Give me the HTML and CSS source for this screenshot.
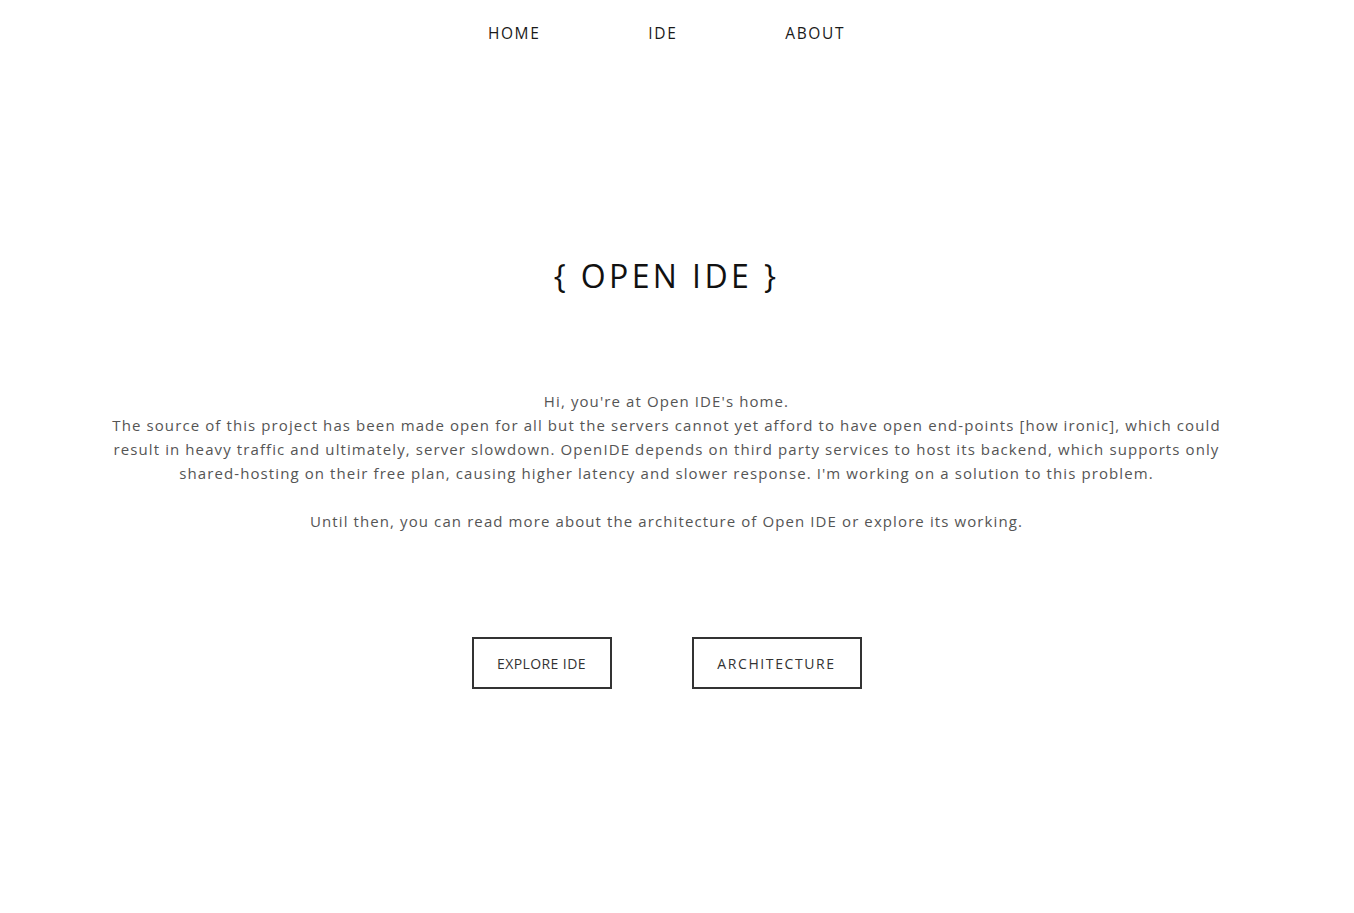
FILE: index.html
```html
<!DOCTYPE html>
<html lang="en">
<head>
<meta charset="utf-8">
<title>Open IDE</title>
<link rel="stylesheet" href="styles.css">
</head>
<body>
<div class="page">
  <nav class="nav">
    <a class="nav-link" href="#">HOME</a>
    <a class="nav-link" href="#">IDE</a>
    <a class="nav-link" href="#">ABOUT</a>
  </nav>
  <h1 class="title">{ OPEN IDE }</h1>
  <p class="intro">Hi, you're at Open IDE's home.<br>The source of this project has been made open for all but the servers cannot yet afford to have open end-points [how ironic], which could result in heavy traffic and ultimately, server slowdown. OpenIDE depends on third party services to host its backend, which supports only shared-hosting on their free plan, causing higher latency and slower response. I'm working on a solution to this problem.<br><br>Until then, you can read more about the architecture of Open IDE or explore its working.</p>
  <div class="actions">
    <a class="btn btn-explore" href="#">EXPLORE IDE</a>
    <a class="btn btn-arch" href="#">ARCHITECTURE</a>
  </div>
</div>
</body>
</html>
```

FILE: styles.css
```css
html, body {
  margin: 0;
  padding: 0;
  background: #fff;
}
.page {
  width: 1333px;
  display: flex;
  flex-direction: column;
  align-items: center;
  font-family: "Open Sans", "Liberation Sans", sans-serif;
}
.nav {
  display: flex;
  justify-content: center;
  padding-top: 23px;
}
.nav-link {
  padding: 0 54px;
  font-size: 15.5px;
  line-height: 20px;
  letter-spacing: 1.6px;
  color: #1a1a1a;
  text-decoration: none;
}
.title {
  margin: 213px 0 0;
  font-size: 32px;
  line-height: 40px;
  font-weight: 400;
  letter-spacing: 3.4px;
  color: #111;
}
.intro {
  margin: 93px 0 0;
  width: 1130px;
  text-align: center;
  font-size: 15px;
  line-height: 24px;
  letter-spacing: 1.1px;
  color: #555;
}
.actions {
  display: flex;
  gap: 80px;
  margin-top: 104px;
}
.btn {
  display: flex;
  align-items: center;
  justify-content: center;
  height: 48px;
  border: 2px solid #333;
  font-size: 14px;
  color: #333;
  text-decoration: none;
}
.btn-explore { width: 136px; letter-spacing: 0.4px; }
.btn-arch { width: 166px; letter-spacing: 1.6px; }
```
